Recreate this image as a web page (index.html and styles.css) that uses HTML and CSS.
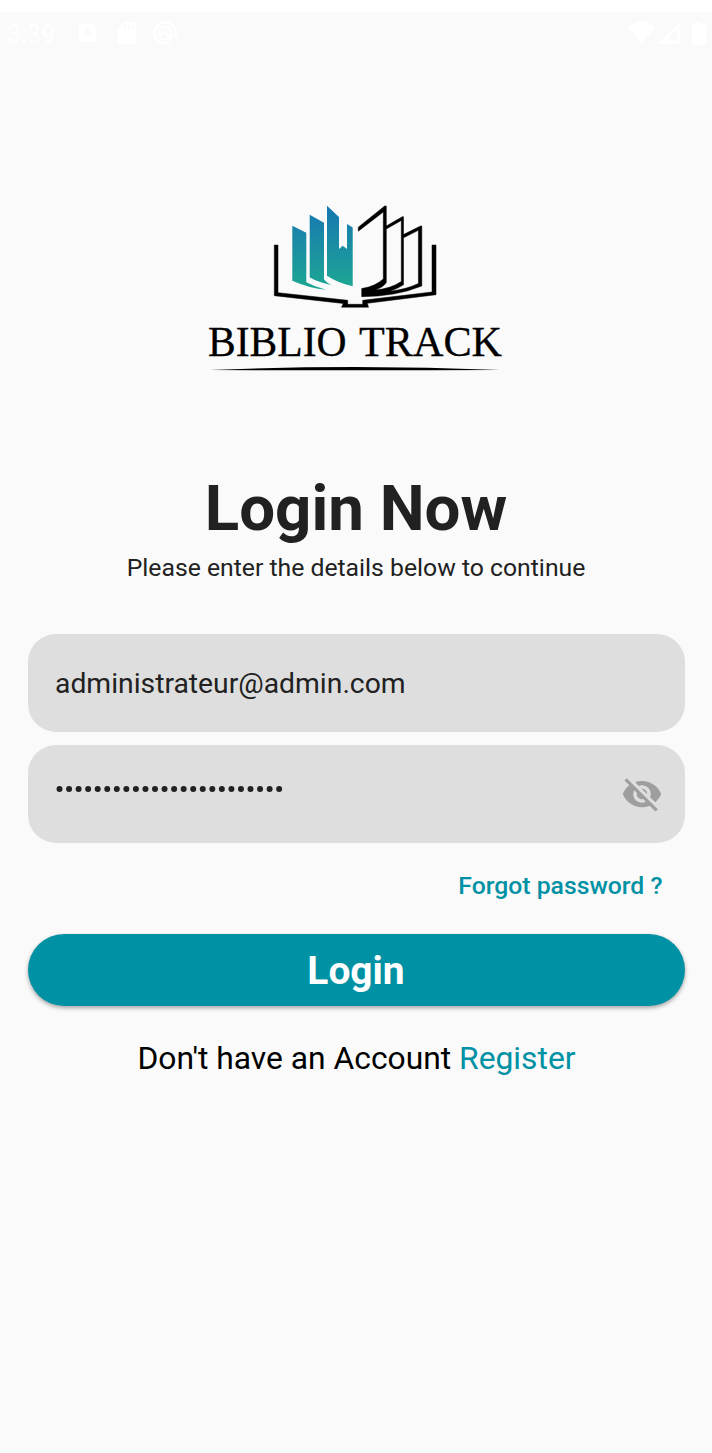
FILE: index.html
```html
<!DOCTYPE html>
<html lang="en">
<head>
<meta charset="utf-8">
<title>Biblio Track</title>
<link rel="stylesheet" href="styles.css">
</head>
<body>
<main class="screen">
  <header class="status">
    <span class="clock">3:39</span>
    <svg class="status-left" width="100" height="26" viewBox="79 21 100 26">
      <path fill="#fff" fill-rule="evenodd" d="M81 24h13q2 0 2 2v14q0 2-2 2H81q-2 0-2-2V26q0-2 2-2zm5.700 5L83 38h2l.8-2h4l.8 2h2L89 29zm1 2.500 1.300 3h-2.600z"/>
      <path fill="#fff" fill-rule="evenodd" d="M124 22h10q2 0 2 2v18q0 2-2 2h-14q-2 0-2-2V28zm0 3v4h2v-4zm4 0v4h2v-4zm4 0v4h2v-4z"/>
      <g fill="none" stroke="#fff"><path stroke-width="2.600" d="M171 42a10.700 10.700 0 1 1 4-5"/><circle cx="165" cy="33" r="6.500" stroke-width="2"/><path stroke-width="2.600" d="M160 35l3.500-3.500 8 7.500"/></g>
    </svg>
    <svg class="status-right" width="80" height="26" viewBox="628 21 80 26">
      <path fill="#fff" d="M628 27q13-11 27 0l-13.500 17z"/>
      <path fill="#fff" fill-rule="evenodd" d="M657 44l23-22v22zm13-3h7V29l-7 7z"/>
      <path fill="#fff" d="M696 22h6v2h2q2 0 2 2v17q0 2-2 2h-10q-2 0-2-2V26q0-2 2-2h2z"/>
    </svg>
  </header>

  <svg class="logo" width="312" height="185" viewBox="200 195 312 185" role="img" aria-label="Biblio Track">
    <defs>
      <linearGradient id="pages" gradientUnits="userSpaceOnUse" x1="0" y1="206" x2="0" y2="288">
        <stop offset="0" stop-color="#1478ae"/><stop offset=".25" stop-color="#1982aa"/><stop offset="1" stop-color="#1da693"/>
      </linearGradient>
    </defs>
    <g fill="url(#pages)">
      <path d="M292.300 225.700 306.300 232.700V282.300Q315 287 326 289.700 310 288.500 292.300 280.700z"/>
      <path d="M309.700 214.700 324 222.700V279.300Q326 282.500 331.700 285 320 283 309.700 277.500z"/>
      <path d="M327 205.700 339 217V249L342.700 245.700 347 249V224L352.700 227.500V286.200Q338 283 327 275.700z"/>
    </g>
    <g class="ink">
      <path d="M274.300 245H278V292.700L347.700 300.300V304.300H362.700V300.300L432 292V245H436V294.700L367.300 303.300 368.500 307.200H341.500L343.300 303.500 274.300 295.700z"/>
      <path fill-rule="evenodd" d="M358.300 227.200 384.700 206H386.300V226L402.300 216.700H403.500V234.500L420.500 226H421.800V286Q396 296.500 361.700 296.700V288.600Q375 286.500 383.300 279V212L358.300 231.200zM386.300 229V282.500Q383 287.500 375 290 390 289 401.300 281.500V220.500zM403.500 237.800V284.800Q397 289 390 291.200 406 289.500 418.400 283.500V230.300z"/>
    </g>
    <g class="wordmark">
      <text x="208" y="355.500" textLength="138.500" lengthAdjust="spacingAndGlyphs">BIBLIO</text>
      <text x="359" y="355.500" textLength="143" lengthAdjust="spacingAndGlyphs">TRACK</text>
    </g>
    <path d="M210 370Q355 364 500 370 355 370.500 210 370z"/>
  </svg>

  <h1 class="title">Login Now</h1>
  <p class="subtitle">Please enter the details below to continue</p>

  <form class="form">
    <div class="field"><span class="email">administrateur@admin.com</span></div>
    <div class="field">
      <svg class="dots" width="229" height="8" viewBox="0 0 229 8"><line x1="4.500" y1="4" x2="224.500" y2="4"/></svg>
      <svg class="eye" width="42" height="42" viewBox="0 0 24 24"><path d="M12 7c2.760 0 5 2.240 5 5 0 .65-.13 1.260-.36 1.830l2.920 2.920c1.510-1.260 2.700-2.890 3.430-4.750-1.730-4.390-6-7.500-11-7.500-1.400 0-2.740.25-3.980.7l2.160 2.160C10.740 7.130 11.350 7 12 7zM2 4.270l2.280 2.280.46.46C3.080 8.300 1.780 10.020 1 12c1.730 4.390 6 7.500 11 7.500 1.550 0 3.030-.3 4.380-.84l.42.42L19.730 22 21 20.730 3.270 3 2 4.270zM7.530 9.800l1.550 1.550c-.05.21-.08.43-.08.65 0 1.660 1.340 3 3 3 .22 0 .44-.03.65-.08l1.550 1.550c-.67.33-1.410.53-2.200.53-2.760 0-5-2.240-5-5 0-.79.2-1.530.53-2.200zm4.310-.78l3.150 3.150.02-.16c0-1.660-1.340-3-3-3l-.17.01z"/></svg>
    </div>
    <a class="forgot">Forgot password ?</a>
    <button class="submit" type="button">Login</button>
  </form>
  <p class="signup">Don't have an Account <a class="register">Register</a></p>
</main>
</body>
</html>
```
FILE: styles.css
```css
* { box-sizing: border-box; }
body { margin: 0; background: #fafafa; font-family: Roboto, sans-serif; color: #212121; }
.screen { height: 1453px; border-top: 12px solid #fff; display: flex; flex-direction: column; align-items: center; }
.status { width: 100%; height: 44px; padding: 9px 4px 0 7px; display: flex; align-items: flex-start; color: #fff; }
.clock { width: 72px; font-size: 25px; line-height: 27px; }
.status-right { margin-left: auto; }
.logo { margin-top: 139px; flex: none; }
.ink { stroke: #000; stroke-width: .5px; }
.wordmark { font-family: "Liberation Serif", serif; font-size: 43px; stroke: #000; stroke-width: .3px; }
.title { margin: 91px 0 0; font-size: 63.600px; line-height: 75px; font-weight: 700; white-space: nowrap; }
.subtitle { margin: 8px 0 0; font-size: 24.750px; line-height: 28px; white-space: nowrap; }
.form { width: 657px; margin-top: 51.500px; display: flex; flex-direction: column; }
.field { height: 98px; margin-bottom: 13.300px; padding: 0 22px 0 27.500px; border-radius: 28px; background: #dedede; display: flex; align-items: center; }
.email { padding-top: 2px; font-size: 28.300px; line-height: 34px; }
.dots { margin-bottom: 10px; }
.dots line { stroke: #212121; stroke-width: 6px; stroke-linecap: round; stroke-dasharray: 0 9.550; }
.eye { margin-left: auto; fill: #9e9e9e; }
.forgot { align-self: flex-end; margin: 16px 22px 0 0; font-size: 24.750px; line-height: 28px; font-weight: 500; color: #0091a4; }
.submit { height: 72px; margin-top: 34px; padding: 0; border: 0; border-radius: 36px; background: #0091a4; color: #fff; font: 700 38.900px/71px Roboto, sans-serif; box-shadow: 0 2px 4px rgba(0,0,0,.35); }
.signup { margin: 33px 0 0; padding-left: 1px; font-size: 31.800px; line-height: 38px; color: #000; white-space: nowrap; }
.register { color: #0091a4; }
```
